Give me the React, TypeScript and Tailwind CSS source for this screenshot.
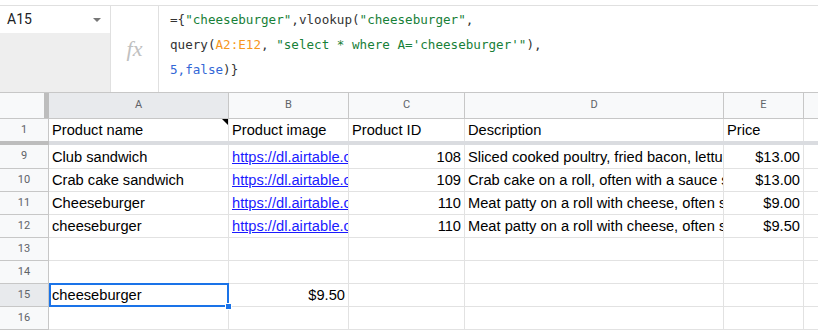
const cols = [
  { key: 'A', w: 'w-[180px]' },
  { key: 'B', w: 'w-[120px]' },
  { key: 'C', w: 'w-[116px]' },
  { key: 'D', w: 'w-[259px]' },
  { key: 'E', w: 'w-[80px]' },
]

type Row = {
  n: string
  cells: string[]
}

const rows: Row[] = [
  { n: '9', cells: ['Club sandwich', 'https://dl.airtable.com/.attachments', '108', 'Sliced cooked poultry, fried bacon, lettuce, tomato', '$13.00'] },
  { n: '10', cells: ['Crab cake sandwich', 'https://dl.airtable.com/.attachments', '109', 'Crab cake on a roll, often with a sauce spread', '$13.00'] },
  { n: '11', cells: ['Cheeseburger', 'https://dl.airtable.com/.attachments', '110', 'Meat patty on a roll with cheese, often served', '$9.00'] },
  { n: '12', cells: ['cheeseburger', 'https://dl.airtable.com/.attachments', '110', 'Meat patty on a roll with cheese, often served', '$9.50'] },
  { n: '13', cells: ['', '', '', '', ''] },
  { n: '14', cells: ['', '', '', '', ''] },
  { n: '15', cells: ['cheeseburger', '$9.50', '', '', ''] },
  { n: '16', cells: ['', '', '', '', ''] },
]

const cellBase = 'relative shrink-0 h-full border-r border-[#e2e2e2] flex'
const cellInner = 'flex-1 min-w-0 px-[3px] flex items-center overflow-hidden whitespace-nowrap'

function RowHead({ n, active }: { n: string; active?: boolean }) {
  return (
    <div
      className={`w-[49px] shrink-0 h-full border-r border-b border-[#c7c7c7] flex items-center justify-center text-[11px] text-[#5f6368] ${
        active ? 'bg-[#e8eaed]' : 'bg-[#f8f9fa]'
      }`}
      style={{ fontFamily: 'Roboto, Arial, sans-serif' }}
    >
      {n}
    </div>
  )
}

function DataRow({ row, first }: { row: Row; first?: boolean }) {
  const sel = row.n === '15'
  return (
    <div className={`flex ${first ? 'h-[24px]' : 'h-[23px]'}`}>
      <RowHead n={row.n} active={sel} />
      <div className="flex flex-1 border-b border-[#e2e2e2]">
        {row.cells.map((c, i) => {
          const right = i === 2 || i === 4 || (sel && i === 1)
          const link = c.startsWith('https')
          return (
            <div key={i} className={`${cellBase} ${cols[i].w}`}>
              <div className={`${cellInner} ${right ? 'justify-end' : ''}`}>
                {link ? (
                  <span className="text-[#1a1aff] underline">{c}</span>
                ) : (
                  <span>{c}</span>
                )}
              </div>
              {sel && i === 0 && (
                <>
                  <div className="absolute -top-[1px] left-0 -right-[1px] -bottom-[1px] border-2 border-[#1a73e8]" />
                  <div className="absolute -right-[4px] -bottom-[4px] w-[7px] h-[7px] bg-[#1a73e8] border border-white z-10" />
                </>
              )}
            </div>
          )
        })}
        <div className="flex-1" />
      </div>
    </div>
  )
}

export default function App() {
  return (
    <div
      className="w-[818px] h-[333px] overflow-hidden bg-white text-black text-[14.67px]"
      style={{ fontFamily: '"Liberation Sans", Arial, sans-serif' }}
    >
      <div className="h-[6px] border-b border-[#e0e0e0]" />

      {/* formula bar */}
      <div className="flex h-[87px] border-b border-[#c7c7c7]">
        <div className="w-[111px] shrink-0 border-r border-[#e0e0e0] flex flex-col">
          <div
            className="h-[27px] bg-white flex items-center justify-between pl-[7px] pr-[9px] text-[14px] text-[#202124]"
            style={{ fontFamily: 'Roboto, Arial, sans-serif' }}
          >
            <span>A15</span>
            <span className="w-0 h-0 border-l-[4px] border-r-[4px] border-t-[4px] border-l-transparent border-r-transparent border-t-[#777]" />
          </div>
          <div className="flex-1 bg-[#eeeeee]" />
        </div>
        <div className="w-[48px] shrink-0 border-r border-[#e0e0e0] flex items-center justify-center">
          <span
            className="italic text-[22px] text-[#c0c0c0] -mt-[2px]"
            style={{ fontFamily: '"Liberation Serif", serif' }}
          >
            fx
          </span>
        </div>
        <div
          className="flex-1 pl-[11px] pt-[1px] text-[12.6px] leading-[25px] text-[#333]"
          style={{ fontFamily: '"DejaVu Sans Mono", "Liberation Mono", monospace' }}
        >
          <div className="whitespace-pre">
            {'={'}
            <span className="text-[#188038]">"cheeseburger"</span>
            {',vlookup('}
            <span className="text-[#188038]">"cheeseburger"</span>
            {','}
          </div>
          <div className="whitespace-pre">
            {'query('}
            <span className="text-[#f7981d]">A2:E12</span>
            {', '}
            <span className="text-[#188038]">"select * where A='cheeseburger'"</span>
            {'),'}
          </div>
          <div className="whitespace-pre">
            <span className="text-[#3367d6]">5,false</span>
            {')}'}
          </div>
        </div>
      </div>

      {/* column headers */}
      <div
        className="flex h-[26px] border-b border-[#c7c7c7] text-[11px] text-[#5f6368]"
        style={{ fontFamily: 'Roboto, Arial, sans-serif' }}
      >
        <div className="w-[49px] shrink-0 bg-[#f8f9fa] border-r-[5px] border-[#bdbdbd]" />
        {cols.map((c) => (
          <div
            key={c.key}
            className={`${c.w} shrink-0 border-r border-[#c7c7c7] flex items-center justify-center ${
              c.key === 'A' ? 'bg-[#e8eaed]' : 'bg-[#f8f9fa]'
            }`}
          >
            {c.key}
          </div>
        ))}
        <div className="flex-1 bg-[#f8f9fa]" />
      </div>

      {/* row 1 */}
      <div className="flex h-[22px]">
        <div
          className="w-[49px] shrink-0 bg-[#f8f9fa] border-r border-[#c7c7c7] flex items-center justify-center text-[11px] text-[#5f6368]"
          style={{ fontFamily: 'Roboto, Arial, sans-serif' }}
        >
          1
        </div>
        {['Product name', 'Product image', 'Product ID', 'Description', 'Price'].map((t, i) => (
          <div key={t} className={`${cellBase} ${cols[i].w}`}>
            <div className={cellInner}>
              <span>{t}</span>
            </div>
            {i === 0 && (
              <span className="absolute top-0 right-0 w-0 h-0 border-l-[6px] border-l-transparent border-t-[6px] border-t-black" />
            )}
          </div>
        ))}
        <div className="flex-1" />
      </div>

      {/* frozen row divider */}
      <div className="flex h-[4px]">
        <div className="w-[49px] shrink-0 bg-[#bdbdbd]" />
        <div className="flex-1 bg-[#dadce0]" />
      </div>

      {rows.map((r, i) => (
        <DataRow key={r.n} row={r} first={i === 0} />
      ))}
    </div>
  )
}
